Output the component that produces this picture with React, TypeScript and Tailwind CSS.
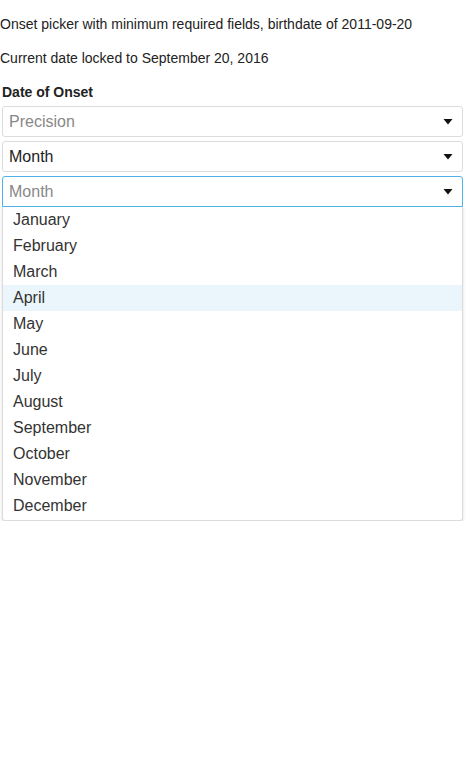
import React from "react";

const months = [
  "January",
  "February",
  "March",
  "April",
  "May",
  "June",
  "July",
  "August",
  "September",
  "October",
  "November",
  "December",
];

function Caret() {
  return (
    <svg width="10" height="6" viewBox="0 0 10 6" className="absolute right-[9px] top-1/2 -translate-y-1/2">
      <path d="M0.5 0 L9.5 0 L5 5.5 Z" fill="#111" />
    </svg>
  );
}

function Select({
  value,
  placeholder,
  focused,
}: {
  value?: string;
  placeholder: string;
  focused?: boolean;
}) {
  return (
    <div
      className={`relative h-[31px] rounded-[3px] border bg-white pl-[6px] text-[16px] leading-[29px] ${
        focused ? "border-[#4fb3e8] rounded-b-none" : "border-[#dcdcdc]"
      }`}
    >
      {value ? (
        <span className="text-[#222]">{value}</span>
      ) : (
        <span className="text-[#888]">{placeholder}</span>
      )}
      <Caret />
    </div>
  );
}

export default function App() {
  return (
    <div className="font-['Liberation_Sans',Arial,sans-serif] text-[14px] text-[#222]">
      <p className="pt-[14px] leading-[20px]">
        Onset picker with minimum required fields, birthdate of 2011-09-20
      </p>
      <p className="mt-[14px] leading-[20px]">Current date locked to September 20, 2016</p>

      <div className="ml-[2px] mt-[14px] w-[461px]">
        <label className="block font-bold leading-[20px]">Date of Onset</label>
        <div className="mt-[4px] flex flex-col gap-[4px]">
          <Select placeholder="Precision" />
          <Select placeholder="Precision" value="Month" />
          <div>
            <Select placeholder="Month" focused />
            <ul className="rounded-b-[3px] border border-t-0 border-[#dcdcdc] bg-white pb-[1px] shadow-[0_1px_3px_rgba(0,0,0,0.15)]">
              {months.map((m) => (
                <li
                  key={m}
                  className={`h-[26px] pl-[10px] text-[16px] leading-[26px] text-[#333] ${
                    m === "April" ? "bg-[#ebf5fc]" : ""
                  }`}
                >
                  {m}
                </li>
              ))}
            </ul>
          </div>
        </div>
      </div>
    </div>
  );
}
